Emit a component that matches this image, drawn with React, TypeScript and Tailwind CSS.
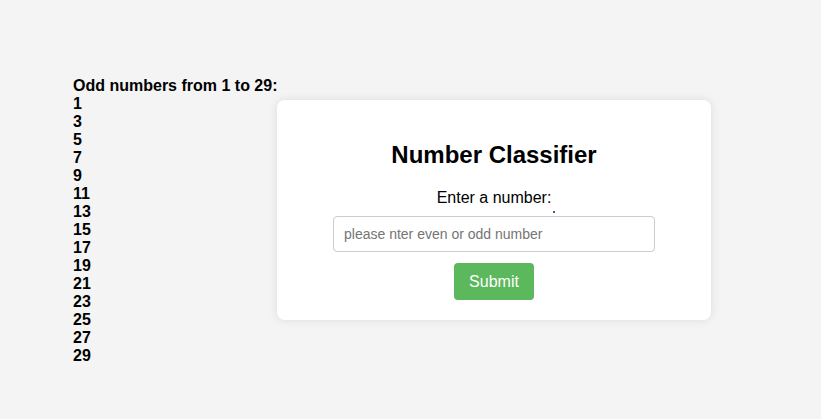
import React, {useState} from "react";

export default function App() {
    const [value, setValue] = useState("");
    const odds: number[] = [];
    for (let i = 1; i <= 29; i += 2) odds.push(i);

    return (
        <div className="flex h-[419px] w-full items-center bg-[#f4f4f4] pl-[73px] font-['Liberation_Sans',Arial,sans-serif] text-black">
            {/* odd number list */}
            <div className="w-[204px] shrink-0 self-start mt-[77px] whitespace-nowrap text-[16px] font-bold leading-[18px]">
                <div>Odd numbers from 1 to 29:</div>
                {odds.map(n => (
                    <div key={n}>{n}</div>
                ))}
            </div>

            <div className="relative mt-[1px] flex w-[434px] shrink-0 flex-col items-center rounded-[8px] bg-white p-5 shadow-[0_0_10px_rgba(0,0,0,0.1)]">
                <h2 className="mt-[22px] mb-5 text-[24px] font-bold leading-[26.8px]">Number Classifier</h2>
                <label className="text-[16px] leading-[18.4px]">Enter a number:</label>
                <span className="absolute left-[276px] top-[111px] h-[2px] w-[2px] rounded-full bg-[#1a1a6e]"></span>
                <input
                    type="text"
                    value={value}
                    onChange={e => setValue(e.target.value)}
                    placeholder="please nter even or odd number"
                    className="mt-[9px] h-[36px] w-[322px] rounded-[4px] border border-[#cccccc] px-[10px] text-[14px] placeholder:text-[#757575] outline-none"
                />
                <button className="mt-[11px] h-[37px] w-[80px] rounded-[4px] bg-[#5cb85c] text-[16px] text-white">
                    Submit
                </button>
            </div>
        </div>
    );
}
